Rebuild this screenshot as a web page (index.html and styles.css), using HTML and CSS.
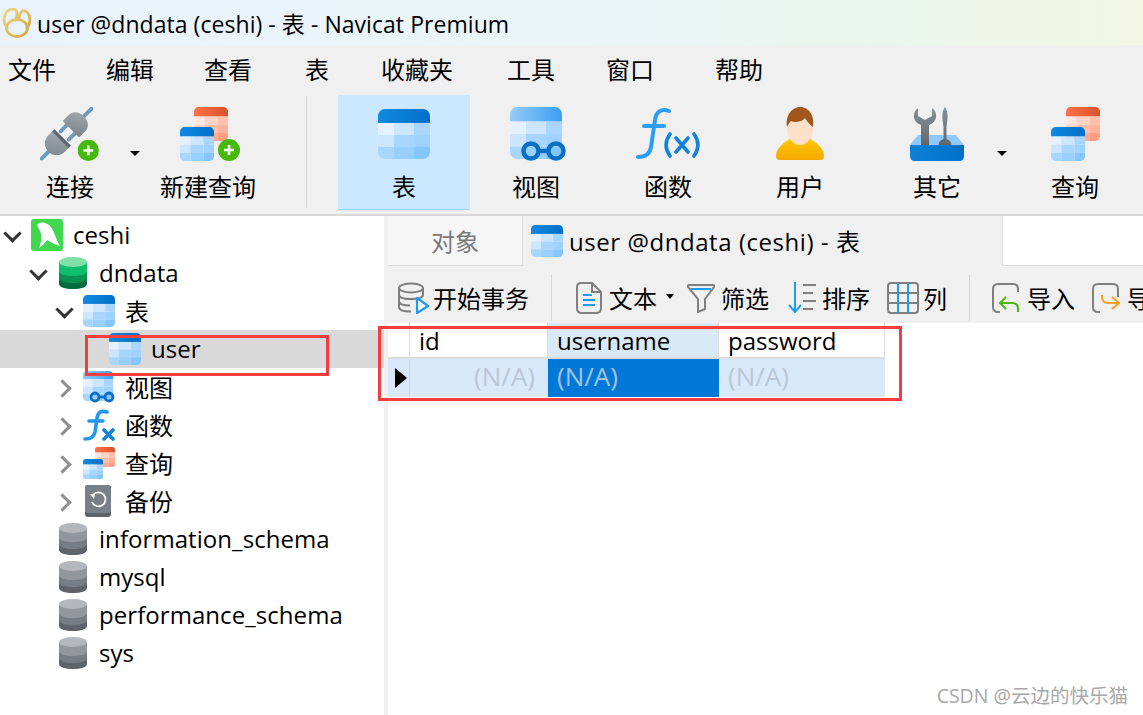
FILE: index.html
```html
<!DOCTYPE html>
<html lang="zh">

<head>
    <meta charset="UTF-8">
    <title>user @dndata (ceshi) - 表 - Navicat Premium</title>
    <link rel="stylesheet" href="styles.css">
</head>

<body>
    <!-- shared icons -->
    <svg class="defs" aria-hidden="true">
        <defs>
            <linearGradient id="blueHead" x1="0" y1="0" x2="1" y2="0"><stop offset="0" stop-color="#1289e2"/><stop offset="1" stop-color="#006fc6"/></linearGradient>
            <linearGradient id="paleHead" x1="0" y1="0" x2="1" y2="0"><stop offset="0" stop-color="#96ccf8"/><stop offset="1" stop-color="#3a9ff2"/></linearGradient>
            <linearGradient id="redHead" x1="0" y1="0" x2="1" y2="0"><stop offset="0" stop-color="#ff7148"/><stop offset="1" stop-color="#d9512c"/></linearGradient>
            <linearGradient id="plugGray" x1="0" y1="0" x2="1" y2="1"><stop offset="0" stop-color="#a2aab0"/><stop offset="1" stop-color="#7b848b"/></linearGradient>
            <linearGradient id="shirt" x1="0" y1="0" x2="0" y2="1"><stop offset="0" stop-color="#ffcb05"/><stop offset="1" stop-color="#f5a800"/></linearGradient>
            <linearGradient id="boxBlue" x1="0" y1="0" x2="1" y2="0"><stop offset="0" stop-color="#0d80d8"/><stop offset="1" stop-color="#0070c8"/></linearGradient>
            <linearGradient id="wrench" x1="0" y1="0" x2="0" y2="1"><stop offset="0" stop-color="#8a9299"/><stop offset="1" stop-color="#5f666d"/></linearGradient>
            <linearGradient id="gold" gradientUnits="userSpaceOnUse" x1="0" y1="0" x2="30" y2="30"><stop offset="0" stop-color="#f3d98c"/><stop offset="1" stop-color="#cfa033"/></linearGradient>
            <clipPath id="tableClip"><rect width="52" height="50" rx="7"/></clipPath>

            <symbol id="i-table" viewBox="0 0 52 50" preserveAspectRatio="none">
                <g clip-path="url(#tableClip)">
                    <rect width="52" height="14" fill="url(#blueHead)"/>
                    <rect y="14" width="16" height="12" fill="#e4f1ff"/><rect x="16" y="14" width="20" height="12" fill="#cde6ff"/><rect x="36" y="14" width="16" height="12" fill="#a9d6ff"/>
                    <rect y="26" width="16" height="12" fill="#cde6ff"/><rect x="16" y="26" width="20" height="12" fill="#a9d6ff"/><rect x="36" y="26" width="16" height="12" fill="#a0d2ff"/>
                    <rect y="38" width="16" height="12" fill="#a9d6ff"/><rect x="16" y="38" width="20" height="12" fill="#99cfff"/><rect x="36" y="38" width="16" height="12" fill="#85c6ff"/>
                </g>
            </symbol>
            <symbol id="i-table-pale" viewBox="0 0 52 50" preserveAspectRatio="none">
                <g clip-path="url(#tableClip)">
                    <rect width="52" height="14" fill="url(#paleHead)"/>
                    <rect y="14" width="16" height="12" fill="#e4f1ff"/><rect x="16" y="14" width="20" height="12" fill="#cde6ff"/><rect x="36" y="14" width="16" height="12" fill="#a9d6ff"/>
                    <rect y="26" width="16" height="12" fill="#cde6ff"/><rect x="16" y="26" width="20" height="12" fill="#a9d6ff"/><rect x="36" y="26" width="16" height="12" fill="#a0d2ff"/>
                    <rect y="38" width="16" height="12" fill="#a9d6ff"/><rect x="16" y="38" width="20" height="12" fill="#99cfff"/><rect x="36" y="38" width="16" height="12" fill="#85c6ff"/>
                </g>
            </symbol>
            <symbol id="i-table-red" viewBox="0 0 52 50" preserveAspectRatio="none">
                <g clip-path="url(#tableClip)">
                    <rect width="52" height="14" fill="url(#redHead)"/>
                    <rect y="14" width="16" height="12" fill="#ffe6df"/><rect x="16" y="14" width="20" height="12" fill="#ffd3c6"/><rect x="36" y="14" width="16" height="12" fill="#ffbfac"/>
                    <rect y="26" width="16" height="12" fill="#ffd3c6"/><rect x="16" y="26" width="20" height="12" fill="#ffbfac"/><rect x="36" y="26" width="16" height="12" fill="#ffb199"/>
                    <rect y="38" width="16" height="12" fill="#ffbfac"/><rect x="16" y="38" width="20" height="12" fill="#ffab92"/><rect x="36" y="38" width="16" height="12" fill="#ff9e82"/>
                </g>
            </symbol>
            <symbol id="i-query" viewBox="0 0 49 54">
                <use href="#i-table-red" x="15" y="0" width="34" height="34"/>
                <use href="#i-table" x="0" y="20" width="34" height="34"/>
            </symbol>
            <symbol id="i-plus" viewBox="0 0 22 22">
                <circle cx="11" cy="11" r="11" fill="#45b90c"/>
                <path d="M11 6v10M6 11h10" stroke="#fff" stroke-width="2.6"/>
            </symbol>
            <symbol id="i-db-green" viewBox="0 0 28 32">
                <path d="M0 5h28v22c0 3-6 5-14 5S0 30 0 27z" fill="#066b3d"/>
                <path d="M0 5h28v16c0 3-6 5-14 5S0 24 0 21z" fill="#07924f"/>
                <path d="M0 5h28v9c0 3-6 5-14 5S0 17 0 14z" fill="#10bd6c"/>
                <ellipse cx="14" cy="5" rx="14" ry="5" fill="#7fe0a8"/>
            </symbol>
            <symbol id="i-db-gray" viewBox="0 0 28 32">
                <path d="M0 5h28v22c0 3-6 5-14 5S0 30 0 27z" fill="#5d6369"/>
                <path d="M0 5h28v16c0 3-6 5-14 5S0 24 0 21z" fill="#777d84"/>
                <path d="M0 5h28v9c0 3-6 5-14 5S0 17 0 14z" fill="#92979e"/>
                <ellipse cx="14" cy="5" rx="14" ry="5" fill="#b4b8bd"/>
            </symbol>
        </defs>
    </svg>

    <div class="titlebar">
        <svg class="logo" viewBox="0 0 30 30">
            <g fill="none" stroke="url(#gold)" stroke-width="2.800" stroke-linecap="round">
                <ellipse cx="15" cy="20" rx="10.500" ry="8.500"/>
                <path d="M5 20C-1 12 3 1 11 1c4 0 5 5 3 10"/>
                <path d="M17 11c0-6 3-9 6-8 5 2 7 11 2 17"/>
            </g>
        </svg>
        <span>user @dndata (ceshi) - 表 - Navicat Premium</span>
    </div>

    <div class="menubar">
        <span>文件</span><span>编辑</span><span>查看</span><span>表</span><span>收藏夹</span><span>工具</span><span>窗口</span><span>帮助</span>
    </div>

    <div class="toolbar">
        <div class="tool">
            <svg class="tool-icon" width="60" height="56" viewBox="0 0 60 56">
                <g transform="translate(26 28) rotate(45)">
                    <path d="M0-37v13M-6-8v10M6-8v10M0 24v12" stroke="#6b9bbd" stroke-width="4" stroke-linecap="round" fill="none"/>
                    <path d="M-12-8v-8c0-6 5-10 12-10s12 4 12 10v8q0 1-1 1h-22q-1 0-1-1z" fill="url(#plugGray)"/>
                    <path d="M-12 6h24v8c0 7-5 12-12 12s-12-5-12-12z" fill="url(#plugGray)"/>
                    <rect x="-12" y="5" width="24" height="3.5" fill="#5f686f"/>
                </g>
                <use href="#i-plus" x="38" y="34" width="22" height="22"/>
            </svg>
            <span>连接</span>
            <i class="caret"></i>
        </div>
        <div class="tool new-query">
            <svg class="tool-icon" width="60" height="54" viewBox="0 0 60 54">
                <use href="#i-table-red" x="14" y="0" width="34" height="34"/>
                <use href="#i-table" x="0" y="20" width="34" height="34"/>
                <use href="#i-plus" x="38" y="32" width="22" height="22"/>
            </svg>
            <span>新建查询</span>
        </div>
        <div class="tool-sep"></div>
        <div class="tool active">
            <svg class="tool-icon" width="52" height="50"><use href="#i-table" width="52" height="50"/></svg>
            <span>表</span>
        </div>
        <div class="tool view">
            <svg class="tool-icon" width="56" height="54" viewBox="0 0 56 54">
                <use href="#i-table-pale" width="52" height="52"/>
                <g fill="none" stroke="#0a70c4" stroke-width="4.5">
                    <circle cx="21" cy="44" r="7.500"/>
                    <circle cx="46" cy="44" r="7.500"/>
                    <path d="M28 44h11"/>
                </g>
            </svg>
            <span>视图</span>
        </div>
        <div class="tool">
            <svg class="tool-icon" width="64" height="54" viewBox="0 0 64 54">
                <path d="M33 4c-8-3-13 1-14 9l-4 27c-1 7-5 10-13 10M8 19h20" fill="none" stroke="#2b9df3" stroke-width="4" stroke-linecap="round"/>
                <path d="M34 27c-5 7-5 15 0 22M58 27c5 7 5 15 0 22M40 31l12 14M52 31L40 45" fill="none" stroke="#1283dc" stroke-width="3.6" stroke-linecap="round"/>
            </svg>
            <span>函数</span>
        </div>
        <div class="tool">
            <svg class="tool-icon" width="48" height="54" viewBox="0 0 48 54">
                <path d="M0 49c0-9 10-15 17-19h14c7 4 17 10 17 19q0 4-4 4H4q-4 0-4-4z" fill="url(#shirt)"/>
                <ellipse cx="24" cy="21" rx="13" ry="17" fill="#fde0ca"/>
                <path d="M11 20C9 6 18 0 24 0c7 0 15 6 13 20-3-2-6-6-8-9-3 4-10 5-14 3-2 2-3 4-4 6z" fill="#a0561c"/>
            </svg>
            <span>用户</span>
        </div>
        <div class="tool other">
            <svg class="tool-icon" width="54" height="54" viewBox="0 0 54 54">
                <path d="M8 28h38l8 10H0z" fill="#8fc9fb"/>
                <path d="M8 1C2 5 2 15 11 18v20h8V18c9-3 9-13 3-17v8l-7 4-7-4z" fill="url(#wrench)"/>
                <path d="M35 0c3 4 3 10 2 16l-.5 4v12c3 1 5 3 5 6h-13c0-3 2-5 5-6V20l-.5-4c-1-6-1-12 2-16z" fill="url(#wrench)"/>
                <path d="M0 38h54v11q0 5-5 5H5q-5 0-5-5z" fill="url(#boxBlue)"/>
            </svg>
            <span>其它</span>
            <i class="caret"></i>
        </div>
        <div class="tool last">
            <svg class="tool-icon" width="49" height="54"><use href="#i-query" width="49" height="54"/></svg>
            <span>查询</span>
        </div>
    </div>

    <div class="main">
        <div class="sidebar">
            <div class="node depth-0">
                <i class="chev open"></i>
                <svg class="node-icon" width="32" height="32" viewBox="0 0 32 32">
                    <rect width="32" height="32" rx="3" fill="#41d74f"/>
                    <path d="M6 6c3-4 9-3 13 1 4 4 5 11 10 20l-6-2c-3-2-5-3-7-4-2 3-5 6-8 8 2-5 3-9 2-14-1-4-3-6-4-9z" fill="#fff"/>
                </svg>
                <span>ceshi</span>
            </div>
            <div class="node depth-1">
                <i class="chev open"></i>
                <svg class="node-icon" width="28" height="32"><use href="#i-db-green" width="28" height="32"/></svg>
                <span>dndata</span>
            </div>
            <div class="node depth-2">
                <i class="chev open"></i>
                <svg class="node-icon" width="32" height="32"><use href="#i-table" width="32" height="32"/></svg>
                <span>表</span>
            </div>
            <div class="node depth-3 selected">
                <svg class="node-icon" width="32" height="32"><use href="#i-table" width="32" height="32"/></svg>
                <span>user</span>
            </div>
            <div class="node depth-2">
                <i class="chev"></i>
                <svg class="node-icon" width="32" height="32" viewBox="0 0 32 32">
                    <use href="#i-table-pale" width="30" height="30"/>
                    <g fill="none" stroke="#0a70c4" stroke-width="2.8">
                        <circle cx="12" cy="26" r="4"/><circle cx="26" cy="26" r="4"/><path d="M16 26h6"/>
                    </g>
                </svg>
                <span>视图</span>
            </div>
            <div class="node depth-2">
                <i class="chev"></i>
                <svg class="node-icon" width="32" height="32" viewBox="0 0 32 32">
                    <path d="M24 3c-7-2-9 1-10 6l-2 14c-1 5-4 7-10 7M6 12h14" fill="none" stroke="#1f97f0" stroke-width="3.6" stroke-linecap="round"/>
                    <path d="M21 21l9 9M30 21l-9 9" stroke="#1283dc" stroke-width="3.6" stroke-linecap="round"/>
                </svg>
                <span>函数</span>
            </div>
            <div class="node depth-2">
                <i class="chev"></i>
                <svg class="node-icon" width="32" height="32" viewBox="0 0 32 32">
                    <use href="#i-table-red" x="12" y="0" width="20" height="20"/>
                    <use href="#i-table" x="0" y="12" width="20" height="20"/>
                </svg>
                <span>查询</span>
            </div>
            <div class="node depth-2">
                <i class="chev"></i>
                <svg class="node-icon" width="32" height="32" viewBox="0 0 32 32">
                    <rect x="2" width="26" height="32" rx="3" fill="#5d6369"/>
                    <rect x="2" width="26" height="28" rx="3" fill="#7a8087"/>
                    <path d="M10 10a7 7 0 1 1-1 7" fill="none" stroke="#fff" stroke-width="1.8"/>
                    <path d="M7 9l5 0-1 5z" fill="#fff"/>
                </svg>
                <span>备份</span>
            </div>
            <div class="node depth-1">
                <i class="chev blank"></i>
                <svg class="node-icon" width="28" height="32"><use href="#i-db-gray" width="28" height="32"/></svg>
                <span>information_schema</span>
            </div>
            <div class="node depth-1">
                <i class="chev blank"></i>
                <svg class="node-icon" width="28" height="32"><use href="#i-db-gray" width="28" height="32"/></svg>
                <span>mysql</span>
            </div>
            <div class="node depth-1">
                <i class="chev blank"></i>
                <svg class="node-icon" width="28" height="32"><use href="#i-db-gray" width="28" height="32"/></svg>
                <span>performance_schema</span>
            </div>
            <div class="node depth-1">
                <i class="chev blank"></i>
                <svg class="node-icon" width="28" height="32"><use href="#i-db-gray" width="28" height="32"/></svg>
                <span>sys</span>
            </div>
        </div>

        <div class="content">
            <div class="tabs">
                <div class="tab-objects">对象</div>
                <div class="tab-active">
                    <svg width="32" height="32"><use href="#i-table" width="32" height="32"/></svg>
                    <span>user @dndata (ceshi) - 表</span>
                </div>
                <div class="tab-rest"></div>
            </div>

            <div class="actions">
                <div class="action begin">
                    <svg width="33" height="32" viewBox="0 0 33 32">
                        <g fill="none" stroke="#7d7d7d" stroke-width="2">
                            <ellipse cx="13" cy="6" rx="12" ry="4.500"/>
                            <path d="M1 6v19c0 3 5 4.500 12 4.500M25 6v7M1 12.500c0 3 5 4.500 12 4.500s12-1.500 12-4.500M1 19c0 3 5 4.500 11 4.500"/>
                        </g>
                        <path d="M19 16l11 8-11 7z" fill="#fff" stroke="#1e9af0" stroke-width="2.2" stroke-linejoin="round"/>
                    </svg>
                    <span>开始事务</span>
                </div>
                <div class="action-sep sep-a"></div>
                <div class="action doc">
                    <svg width="26" height="32" viewBox="0 0 26 32">
                        <path d="M5 1h11l9 9v16q0 5-5 5H6q-5 0-5-5V5q0-4 4-4zM16 1v9h9" fill="none" stroke="#808080" stroke-width="2"/>
                        <path d="M7 13h9M7 18h12M7 23h12" stroke="#1e9af0" stroke-width="2"/>
                    </svg>
                    <span>文本</span>
                    <i class="caret small"></i>
                </div>
                <div class="action filter">
                    <svg width="28" height="30" viewBox="0 0 28 30">
                        <path d="M2 2h24q2 0 1 2L18 16v10l-7 3V16L1 4Q0 2 2 2z" fill="none" stroke="#808080" stroke-width="2"/>
                        <path d="M4 6h20" stroke="#1e9af0" stroke-width="2"/>
                    </svg>
                    <span>筛选</span>
                </div>
                <div class="action sort">
                    <svg width="30" height="32" viewBox="0 0 30 32">
                        <path d="M7 0v30M1 23l6 7 6-7" fill="none" stroke="#1e9af0" stroke-width="2"/>
                        <path d="M15 3h13M15 11h10M15 19h13M15 27h10" stroke="#808080" stroke-width="2"/>
                    </svg>
                    <span>排序</span>
                </div>
                <div class="action cols">
                    <svg width="32" height="32" viewBox="0 0 32 32">
                        <rect x="1" y="1" width="30" height="30" rx="3" fill="none" stroke="#808080" stroke-width="2"/>
                        <path d="M1 11h30M1 21h30" stroke="#808080" stroke-width="2"/>
                        <path d="M11 1v30M21 1v30" stroke="#1e9af0" stroke-width="2"/>
                    </svg>
                    <span>列</span>
                </div>
                <div class="action-sep sep-b"></div>
                <div class="action import">
                    <svg width="28" height="30" viewBox="0 0 28 30">
                        <path d="M8 29H6q-5 0-5-5V6q0-5 5-5h15q5 0 5 5v3" fill="none" stroke="#808080" stroke-width="2"/>
                        <path d="M14 14l-6 6 6 6M8 20h12q6 0 6 6v3" fill="none" stroke="#4ab80e" stroke-width="2"/>
                    </svg>
                    <span>导入</span>
                </div>
                <div class="action export">
                    <svg width="28" height="30" viewBox="0 0 28 30">
                        <path d="M8 29H6q-5 0-5-5V6q0-5 5-5h15q5 0 5 5v8" fill="none" stroke="#808080" stroke-width="2"/>
                        <path d="M20 14l7 6-7 6M27 20H16q-6 0-6-6v-2" fill="none" stroke="#f7a11a" stroke-width="2"/>
                    </svg>
                    <span>导出</span>
                </div>
            </div>

            <div class="grid">
                <div class="gh corner"></div>
                <div class="gh">id</div>
                <div class="gh current">username</div>
                <div class="gh">password</div>
                <div class="gd marker"><i class="arrow"></i></div>
                <div class="gd right">(N/A)</div>
                <div class="gd focused">(N/A)</div>
                <div class="gd">(N/A)</div>
            </div>
        </div>
    </div>

    <!-- red marks drawn on the screenshot -->
    <div class="mark mark-row"></div>
    <div class="mark mark-grid"></div>
    <div class="watermark">CSDN @云边的快乐猫</div>
</body>

</html>
```

FILE: styles.css
```css
* {
    box-sizing: border-box;
}

body {
    margin: 0;
    width: 1143px;
    height: 715px;
    overflow: hidden;
    position: relative;
    background-color: #fff;
    color: #000;
    font-family: "Open Sans", "Noto Sans CJK SC", sans-serif;
    font-size: 24px;
}

.defs {
    position: absolute;
    width: 0;
    height: 0;
}

svg {
    display: block;
    flex-shrink: 0;
}

.titlebar {
    height: 45px;
    display: flex;
    align-items: center;
    padding-left: 2px;
    font-size: 23px;
    letter-spacing: 0.05px;
    background: linear-gradient(90deg, #eaf3fc 0%, #eaf5f8 45%, #e9f6ee 75%, #f3f6e3 100%);
}

.logo {
    width: 30px;
    height: 30px;
    margin-right: 5px;
}

.menubar {
    height: 48px;
    display: grid;
    grid-template-columns: 98px 98px 101px 76px 126px 99px 109px auto;
    align-items: center;
    padding-left: 8px;
    padding-bottom: 1px;
    background-color: #f0f0f0;
}

.toolbar {
    height: 123px;
    display: flex;
    padding: 2px 0 0 4px;
    background-color: #f0f0f0;
    border-bottom: 2px solid #d9d9d9;
}

.tool {
    position: relative;
    width: 132px;
    height: 115px;
    padding-top: 12px;
    display: flex;
    flex-direction: column;
    align-items: center;
}

.tool-icon {
    height: 54px;
}

.tool span {
    margin-top: 11px;
    line-height: 30px;
}

.tool.active {
    background-color: #cce8ff;
    border-bottom: 1px solid #99d1ff;
}

.active .tool-icon {
    height: 50px;
    margin: 2px 0;
}

.new-query {
    margin-left: 6px;
}

.new-query .tool-icon {
    margin-left: 4px;
}

.view .tool-icon {
    margin-left: 4px;
}

.other {
    margin-left: 5px;
}

.last {
    margin-left: 6px;
}

.tool-sep {
    width: 1px;
    height: 112px;
    margin: 1px 31px 0 32px;
    background-color: #d5d5d5;
}

.caret {
    position: absolute;
    right: -4px;
    top: 56px;
    border-left: 5px solid transparent;
    border-right: 5px solid transparent;
    border-top: 5px solid #000;
}

.main {
    height: 499px;
    display: flex;
}

.sidebar {
    width: 384px;
    flex-shrink: 0;
}

.node {
    height: 38px;
    display: flex;
    align-items: center;
    white-space: nowrap;
}

.node span {
    margin-bottom: 2px;
    letter-spacing: 0.06px;
}

.node.selected {
    background-color: #d9d9d9;
}

.depth-0 { padding-left: 5px; }
.depth-1 { padding-left: 31px; }
.depth-2 { padding-left: 57px; }
.depth-3 { padding-left: 109px; }

.node-icon {
    margin-right: 10px;
}

.depth-1 .node-icon {
    margin-left: 2px;
    margin-right: 12px;
}

.chev {
    width: 26px;
    height: 38px;
    position: relative;
    flex-shrink: 0;
}

.chev::before {
    content: "";
    position: absolute;
    left: -1px;
    top: 14px;
    width: 10px;
    height: 10px;
    border-right: 3px solid #8f8f8f;
    border-bottom: 3px solid #8f8f8f;
    transform: rotate(-45deg);
}

.chev.open::before {
    left: 1px;
    top: 11px;
    border-color: #333;
    transform: rotate(45deg);
}

.chev.blank::before {
    display: none;
}

.content {
    flex: 1;
    min-width: 0;
    border-left: 4px solid #f0f0f0;
}

.tabs {
    height: 50px;
    display: flex;
    background-color: #f0f0f0;
}

.tab-objects {
    width: 135px;
    height: 50px;
    display: flex;
    align-items: center;
    justify-content: center;
    color: #7a7a7a;
    background-color: #f6f6f6;
    border-right: 1px solid #dcdcdc;
    border-bottom: 1px solid #dcdcdc;
}

.tab-active {
    width: 479px;
    display: flex;
    align-items: center;
    gap: 6px;
    padding-left: 8px;
}

.tab-active span {
    margin-bottom: 2px;
    letter-spacing: 0.55px;
}

.tab-rest {
    flex: 1;
    background-color: #fff;
    border-left: 1px solid #dcdcdc;
    border-bottom: 1px solid #dcdcdc;
}

.actions {
    height: 57px;
    display: flex;
    align-items: center;
    padding: 6px 0 0 10px;
    background-color: #f0f0f0;
    white-space: nowrap;
}

.action {
    display: flex;
    align-items: center;
    position: relative;
}

.action span {
    margin-left: 7px;
}

.begin span { margin-left: 2px; }
.action-sep {
    width: 1px;
    height: 46px;
    background-color: #d5d5d5;
    flex-shrink: 0;
}
.sep-a { margin: 0 24px 0 22px; }
.doc { margin-right: 30px; }
.caret.small {
    right: -17px;
    top: 14px;
    border-left-width: 4px;
    border-right-width: 4px;
}
.filter { margin-right: 19px; }
.filter span { margin-left: 6px; }
.sort { margin-right: 17px; }
.sort span { margin-left: 4px; }
.cols span { margin-left: 4px; }
.sep-b { margin: 0 22px; }
.import { margin-right: 17px; }

.grid {
    display: grid;
    grid-template-columns: 22px 138px 171px 166px;
    grid-template-rows: 36px 38px;
    width: 497px;
}

.gh,
.gd {
    padding-left: 9px;
    line-height: 36px;
    border-right: 1px solid #dcdcdc;
    white-space: nowrap;
}

.gh {
    border-bottom: 2px solid #dcdcdc;
}

.gh.current {
    background-color: #d9e9f8;
}

.gd {
    background-color: #d9e9f9;
    color: #bcc6d8;
    border-right: none;
    font-size: 26px;
    line-height: 34px;
}

.right {
    text-align: right;
    padding-right: 13px;
}

.focused {
    background-color: #0078d7;
    color: #a6c1e0;
}

.marker {
    display: flex;
    align-items: center;
    padding-left: 7px;
    border-right: 1px solid #cfdbe8;
}

.arrow {
    border-top: 10px solid transparent;
    border-bottom: 10px solid transparent;
    border-left: 12px solid #000;
}

.mark {
    position: absolute;
    border: 3px solid #f53c3f;
}

.mark-row {
    left: 85px;
    top: 335px;
    width: 244px;
    height: 41px;
}

.mark-grid {
    left: 378px;
    top: 326px;
    width: 524px;
    height: 75px;
}

.watermark {
    position: absolute;
    right: 15px;
    bottom: 6px;
    font-size: 19.5px;
    color: #a8a8a8;
}
```
